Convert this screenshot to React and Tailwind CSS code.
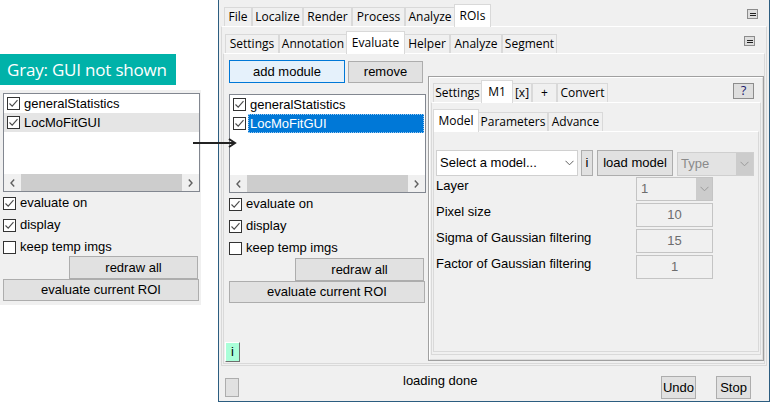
import React from 'react';

const ui = "font-['Open_Sans',sans-serif]";
const sans = "font-['Liberation_Sans',Arial,sans-serif]";

// chevron used by the combo boxes
const Chevron = ({ color = '#606060' }) => (
  <svg width="9" height="6" viewBox="0 0 9 6">
    <path d="M0.5 0.8 L4.5 4.8 L8.5 0.8" fill="none" stroke={color} strokeWidth="1" />
  </svg>
);

const Check = ({ checked }) => (
  <span className="w-[13px] h-[13px] border border-[#333] bg-white flex items-center justify-center shrink-0">
    {checked && (
      <svg width="11" height="11" viewBox="0 0 11 11">
        <path d="M1.5 5.5 L4.2 8.2 L9.5 2.2" fill="none" stroke="#4a4a4a" strokeWidth="1.1" />
      </svg>
    )}
  </span>
);

const MiniBtn = () => (
  <div className="w-[11px] h-[10px] border border-[#8c8c8c] bg-[#dedede] flex flex-col items-center justify-center gap-[1px]">
    <div className="w-[6px] h-[1px] bg-[#222]" />
    <div className="w-[6px] h-[1px] bg-[#222]" />
  </div>
);

const Tab = ({ label, w, active }) => (
  <div
    className={`${ui} text-[12px] text-black flex items-center justify-center border border-b-0 border-[#d9d9d9] shrink-0 ${w} ${
      active ? 'bg-white h-[23px] -mb-px relative z-10 -mx-px' : 'bg-[#f0f0f0] h-[19px]'
    }`}
  >
    {label}
  </div>
);

const Btn = ({ children, className = '' }) => (
  <div
    className={`${sans} text-[13px] text-black bg-[#e1e1e1] border border-[#adadad] flex items-center justify-center shrink-0 ${className}`}
  >
    {children}
  </div>
);

const HScroll = () => (
  <div className="h-[17px] flex bg-[#f0f0f0] shrink-0">
    <div className="w-[17px] flex items-center justify-center">
      <svg width="5" height="8" viewBox="0 0 5 8">
        <path d="M4.2 0.5 L1 4 L4.2 7.5" fill="none" stroke="#606060" strokeWidth="1.4" />
      </svg>
    </div>
    <div className="flex-1 bg-[#cdcdcd]" />
    <div className="w-[17px] flex items-center justify-center">
      <svg width="5" height="8" viewBox="0 0 5 8">
        <path d="M0.8 0.5 L4 4 L0.8 7.5" fill="none" stroke="#606060" strokeWidth="1.4" />
      </svg>
    </div>
  </div>
);

const ListBox = ({ selected }) => (
  <div className="w-[197px] h-[99px] border border-[#828790] bg-white flex flex-col shrink-0">
    <div className="h-[19px] flex items-center pl-[3px] gap-[4px]">
      <Check checked />
      <span className={`${sans} text-[13px] text-black`}>generalStatistics</span>
    </div>
    {selected ? (
      <div className="h-[19px] flex items-center pl-[3px] gap-[2px]">
        <Check checked />
        <span className={`${sans} text-[13px] text-white bg-[#0078d7] flex-1 h-[19px] flex items-center pl-[2px] mr-[1px] outline-1 outline-dotted outline-offset-[-1px] outline-[#9cc9f0]`}>
          LocMoFitGUI
        </span>
      </div>
    ) : (
      <div className="h-[19px] flex items-center pl-[3px] gap-[4px] bg-[#e5e5e5]">
        <Check checked />
        <span className={`${sans} text-[13px] text-black`}>LocMoFitGUI</span>
      </div>
    )}
    <div className="flex-1" />
    <HScroll />
  </div>
);

const CheckRow = ({ label, checked }) => (
  <div className="h-[22px] flex items-center gap-[4px] shrink-0">
    <Check checked={checked} />
    <span className={`${sans} text-[13px] text-black`}>{label}</span>
  </div>
);

const Options = () => (
  <>
    <CheckRow label="evaluate on" checked />
    <CheckRow label="display" checked />
    <CheckRow label="keep temp imgs" />
  </>
);

const FieldRow = ({ label, children }) => (
  <div className="h-[24px] flex">
    <div className={`${sans} text-[13px] text-black w-[200px] leading-[15px] pt-[1px]`}>{label}</div>
    {children}
  </div>
);

const NumBox = ({ value }) => (
  <div className={`${sans} text-[13px] text-[#6d6d6d] w-[77px] h-[24px] border border-[#c4c4c4] bg-[#f0f0f0] flex items-center justify-center`}>
    {value}
  </div>
);

const App = () => {
  return (
    <div className="w-[770px] h-[402px] bg-white flex relative overflow-hidden">
      {/* left annotation: plain panel */}
      <div className="w-[218px] shrink-0 pt-[54px]">
        <div className={`${ui} w-[176px] h-[31px] bg-[#00b2a9] text-white text-[17px] tracking-[-0.2px] flex items-center pl-[7px]`}>
          Gray: GUI not shown
        </div>
        <div className="mt-[5px] w-[201px] h-[215px] bg-[#f0f0f0] pl-[3px] pt-[3px] flex flex-col">
          <ListBox />
          <Options />
          <Btn className="w-[129px] h-[23px] ml-[66px] -mt-[2px]">redraw all</Btn>
          <Btn className="w-[196px] h-[22px]">evaluate current ROI</Btn>
        </div>
      </div>

      {/* window */}
      <div className="w-[552px] h-[402px] shrink-0 border-x border-b border-[#2c5d80] bg-[#f0f0f0] flex flex-col">
        <div className="h-[26px] flex items-end pl-[5px] pr-[11px] shrink-0">
          <Tab w="w-[28px]" label="File" />
          <Tab w="w-[51px]" label="Localize" />
          <Tab w="w-[49px]" label="Render" />
          <Tab w="w-[53px]" label="Process" />
          <Tab w="w-[50px]" label="Analyze" />
          <Tab w="w-[37px]" label="ROIs" active />
          <div className="ml-auto self-start mt-[9px]">
            <MiniBtn />
          </div>
        </div>

        <div className="mx-[2px] h-[340px] border border-[#d9d9d9] border-t-white flex flex-col shrink-0">
          <div className="h-[26px] flex items-end pl-[3px] pr-[11px] shrink-0">
            <Tab w="w-[54px]" label="Settings" />
            <Tab w="w-[68px]" label="Annotation" />
            <Tab w="w-[59px]" label="Evaluate" active />
            <Tab w="w-[46px]" label="Helper" />
            <Tab w="w-[52px]" label="Analyze" />
            <Tab w="w-[55px]" label="Segment" />
            <div className="ml-auto self-start mt-[9px]">
              <MiniBtn />
            </div>
          </div>

          <div className="flex-1 mx-[1px] mb-[1px] border border-[#d9d9d9] border-t-white flex">
            {/* evaluate: left column */}
            <div className="w-[203px] shrink-0 flex flex-col pl-[5px] pt-[6px] pb-[1px]">
              <div className="flex shrink-0">
                <div className={`${sans} text-[13px] text-black w-[116px] h-[23px] bg-[#e5f1fb] border border-[#0078d7] flex items-center justify-center`}>
                  add module
                </div>
                <Btn className="w-[75px] h-[22px] ml-[3px] mt-[1px]">remove</Btn>
              </div>
              <div className="mt-[11px]">
                <ListBox selected />
              </div>
              <Options />
              <Btn className="w-[129px] h-[23px] ml-[66px] -mt-[1px]">redraw all</Btn>
              <Btn className="w-[196px] h-[22px]">evaluate current ROI</Btn>
              <div className="flex-1" />
              <div className={`${sans} -ml-[4px] w-[15px] h-[20px] bg-[#aaffd9] border border-white border-r-[#6e6e6e] border-b-[#6e6e6e] text-[13px] text-black flex items-center justify-center`}>
                i
              </div>
            </div>

            {/* evaluate: module panel */}
            <div className="ml-[1px] mt-[22px] mb-[2px] w-[338px] border border-[#a0a0a0] flex">
              <div className="flex-1 border border-white border-r-[#dcdcdc] border-b-[#dcdcdc] flex flex-col">
                <div className="h-[24px] flex items-end pl-[3px] pr-[8px] shrink-0">
                  <Tab w="w-[49px]" label="Settings" />
                  <Tab w="w-[32px]" label="M1" active />
                  <Tab w="w-[20px]" label="[x]" />
                  <Tab w="w-[25px]" label="+" />
                  <Tab w="w-[51px]" label="Convert" />
                  <div className={`${ui} ml-auto mb-[3px] w-[21px] h-[16px] border border-[#8c8c8c] bg-[#dedede] text-[13px] text-[#1c1c6e] flex items-center justify-center`}>
                    ?
                  </div>
                </div>
                <div className="flex-1 mx-[1px] mb-[4px] border border-[#d9d9d9] border-t-white flex flex-col">
                  <div className="h-[28px] flex items-end pl-[2px] shrink-0">
                    <Tab w="w-[46px]" label="Model" active />
                    <Tab w="w-[70px]" label="Parameters" />
                    <Tab w="w-[55px]" label="Advance" />
                  </div>
                  <div className="flex-1 mx-[1px] mb-[2px] border border-[#d9d9d9] border-t-white pl-[2px] pt-[18px] flex flex-col">
                    <div className="flex h-[26px]">
                      <div className="w-[142px] h-[26px] bg-white border border-[#d0d0d0] flex items-center pl-[3px] pr-[3px]">
                        <span className={`${sans} text-[13px] text-black flex-1`}>Select a model...</span>
                        <Chevron />
                      </div>
                      <Btn className="w-[12px] h-[26px] ml-[3px]">i</Btn>
                      <Btn className="w-[76px] h-[26px] ml-[4px]">load model</Btn>
                      <div className="w-[77px] h-[24px] mt-[2px] ml-[4px] border border-[#cfcfcf] bg-[#e3e3e3] flex">
                        <span className={`${sans} text-[13px] text-[#8a8a8a] flex-1 flex items-center pl-[3px]`}>Type</span>
                        <div className="w-[17px] bg-[#cccccc] flex items-center justify-center">
                          <Chevron color="#9a9a9a" />
                        </div>
                      </div>
                    </div>
                    <div className="flex flex-col gap-[2px] mt-[1px]">
                      <FieldRow label="Layer">
                        <div className="w-[77px] h-[24px] border border-[#c4c4c4] bg-[#f0f0f0] flex">
                          <span className={`${sans} text-[13px] text-[#6d6d6d] flex-1 flex items-center pl-[4px]`}>1</span>
                          <div className="w-[16px] bg-[#cccccc] flex items-center justify-center">
                            <Chevron color="#9a9a9a" />
                          </div>
                        </div>
                      </FieldRow>
                      <FieldRow label="Pixel size">
                        <NumBox value="10" />
                      </FieldRow>
                      <FieldRow label="Sigma of Gaussian filtering">
                        <NumBox value="15" />
                      </FieldRow>
                      <FieldRow label="Factor of Gaussian filtering">
                        <NumBox value="1" />
                      </FieldRow>
                    </div>
                  </div>
                </div>
              </div>
            </div>
          </div>
        </div>

        {/* status bar */}
        <div className="flex-1 flex items-start">
          <div className="ml-[6px] mt-[12px] w-[14px] h-[19px] bg-[#e1e1e1] border border-[#adadad]" />
          <span className={`${sans} text-[13px] text-black ml-[164px] mt-[7px] leading-[15px]`}>loading done</span>
          <Btn className="ml-auto mt-[10px] w-[35px] h-[23px]">Undo</Btn>
          <Btn className="ml-[20px] mr-[18px] mt-[10px] w-[35px] h-[23px]">Stop</Btn>
        </div>
      </div>

      {/* arrow between the two lists */}
      <svg className="absolute left-[192px] top-[138px]" width="46" height="10" viewBox="0 0 46 10">
        <path d="M1 5 H42" stroke="#222" strokeWidth="2" />
        <path d="M37 1 L43 5 L37 9" fill="none" stroke="#222" strokeWidth="2" />
      </svg>
    </div>
  );
};

export default App;
